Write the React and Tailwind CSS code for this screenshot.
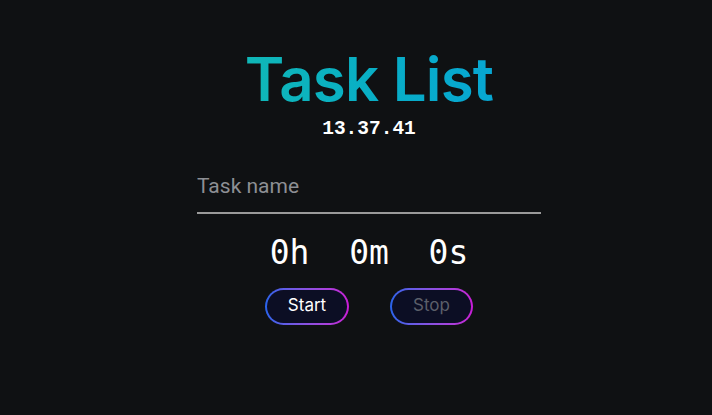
import { useState } from 'react'

function PillButton({ children, muted }) {
  return (
    <div className="rounded-full bg-gradient-to-r from-[#2563eb] to-[#c81ad6] p-[2px]">
      <button
        className={
          'h-[33px] rounded-full bg-[#0c0e24] text-[17px] ' +
          (muted ? 'w-[79px] text-[#5c5f6a]' : 'w-[80px] text-white')
        }
      >
        {children}
      </button>
    </div>
  )
}

export default function App() {
  const [task, setTask] = useState('')

  return (
    <div className="flex h-[415px] w-full flex-col items-center bg-[#0f1113] pl-[26px] pt-[45px] font-['Inter',sans-serif]">
      <h1 className="bg-gradient-to-r from-[#10b7b7] to-[#07a6d2] bg-clip-text text-[60px] font-semibold leading-[68px] tracking-[-0.8px] text-transparent">
        Task List
      </h1>
      <div className="mt-[5px] font-['Liberation_Mono',monospace] text-[19.5px] font-bold leading-[22px] text-white">
        13.37.41
      </div>

      <input
        value={task}
        onChange={(e) => setTask(e.target.value)}
        placeholder="Task name"
        className="mt-[31px] w-[344px] border-b-2 border-[#9a9a9a] bg-transparent pb-[9px] font-['Roboto',sans-serif] text-[21px] text-white outline-none placeholder:text-[#8d8f94]"
      />

      <div className="mt-[19px] whitespace-pre font-['DejaVu_Sans_Mono',monospace] text-[33px] leading-[40px] text-white">
        {'0h  0m  0s'}
      </div>

      <div className="mt-[15px] flex gap-[41px]">
        <PillButton>Start</PillButton>
        <PillButton muted>Stop</PillButton>
      </div>
    </div>
  )
}
